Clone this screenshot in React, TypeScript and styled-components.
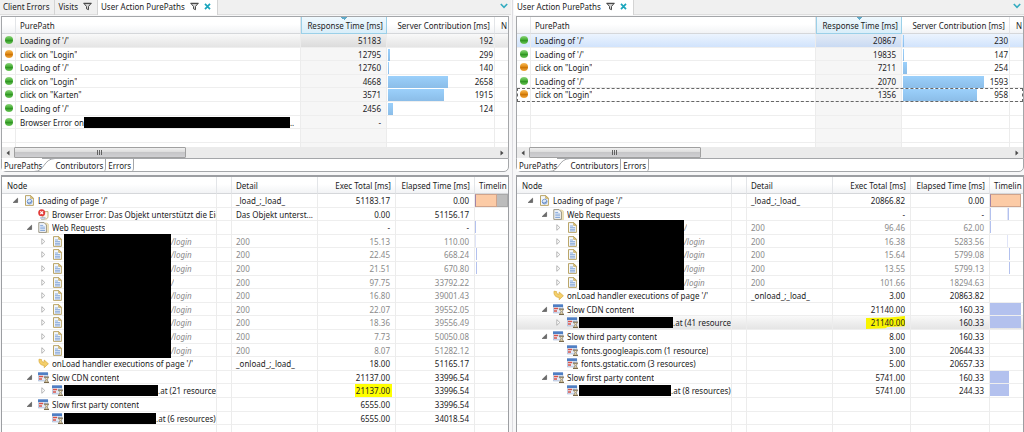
import React from "react";
import styled, { createGlobalStyle, css } from "styled-components";

const Global = createGlobalStyle`
  * { box-sizing: border-box; }
  body { margin: 0; background: #fff; overflow: hidden; }
  body, button {
    font-family: "Noto Sans", "Open Sans", sans-serif;
    font-size: 8px;
    line-height: 13px;
    color: #1c1c24;
  }
  button { background: none; border: 0; padding: 0; margin: 0; }
`;

/* ---------- window and panes ---------- */

const Workbench = styled.main`
  display: grid;
  grid-template-columns: 1fr 1fr;
  height: 100vh;
`;

const Pane = styled.section<{ $second?: boolean }>`
  display: flex;
  flex-direction: column;
  min-width: 0;
  min-height: 0;
  background: #f7f7f8;
  padding: ${(p) => (p.$second ? "0 0 0 3px" : "0 3px 0 1px")};
  border-left: ${(p) => (p.$second ? "1px solid #dcdce0" : "0")};
`;

const ViewTabs = styled.nav<{ $second?: boolean }>`
  display: flex;
  height: 15px;
  margin: ${(p) => (p.$second ? "0 0 0 -2px" : "0 -2px 0 -1px")};
  background: #f0f0f0;
  border-bottom: 1px solid #dedede;
`;

const ViewTab = styled.div<{ $active?: boolean }>`
  display: flex;
  align-items: center;
  gap: 5px;
  height: 15px;
  padding: 0 5px 2px 3px;
  white-space: nowrap;
  border-right: 1px solid #d4d4d4;
  ${(p) => p.$active && css`
    background: #fff;
    padding-right: 6px;
  `}
`;

const ViewMenu = styled.button`
  display: flex;
  align-items: center;
  margin-left: auto;
  padding: 0 3px 2px;
`;

const Glyph = styled.svg`
  display: block;
  flex: none;
`;

const ListFrame = styled.div`
  margin-top: 1px;
  border: 1px solid #a4a6a9;
  border-bottom: 0;
  background: #fff;
  height: 131px;
  overflow: hidden;
`;

const TreeFrame = styled.div`
  flex: 1;
  min-height: 0;
  margin-top: 3px;
  border: solid #9c9ea2;
  border-width: 2px 1px 0;
  background: #fff;
  overflow: hidden;
`;

/* ---------- tables ---------- */

const Grid = styled.table`
  width: 100%;
  table-layout: fixed;
  border-collapse: separate;
  border-spacing: 0;
`;

const Col = styled.col<{ $w?: number }>`
  width: ${(p) => (p.$w ? p.$w + "px" : "auto")};
`;

const HeadCell = styled.th<{ $right?: boolean; $sorted?: boolean; $pad?: number }>`
  height: 17px;
  padding: 0 ${(p) => p.$pad ?? 4}px;
  font-weight: 400;
  text-align: ${(p) => (p.$right ? "right" : "left")};
  white-space: nowrap;
  overflow: hidden;
  background: linear-gradient(#fff, #fff 45%, #f2f3f5);
  border-right: 1px solid #e3e5e8;
  border-bottom: 1px solid #d5d7da;
  &:last-child { border-right: 0; padding-right: 0; }
  ${(p) => p.$sorted && css`
    background:
      conic-gradient(from -45deg at 50% 3px, #5fa9c8 90deg, transparent 0) center top / 6px 3px no-repeat,
      linear-gradient(#f0f9fe, #d9eef9);
    border-right-color: #9bd0e8;
    border-left: 1px solid #9bd0e8;
    border-bottom-color: #9bd0e8;
  `}
`;

const Line = styled.tr<{ $tone?: "grey" | "blue" | "focus" }>`
  height: 14px;
  &:nth-child(5n + 2), &:nth-child(5n + 4) { height: 13px; }
  ${(p) => p.$tone === "grey" && css`background: linear-gradient(#f9f9f9, #e3e3e3);`}
  ${(p) => p.$tone === "blue" && css`background: linear-gradient(#ecf4fe, #cfe2fc);`}
  ${(p) => p.$tone === "focus" && css`
    outline: 1px dashed #666;
    outline-offset: -1px;
  `}
`;

const Cell = styled.td<{ $right?: boolean; $muted?: boolean; $shade?: boolean; $pad?: number }>`
  padding: 0 ${(p) => p.$pad ?? 4}px;
  height: inherit;
  vertical-align: top;
  white-space: nowrap;
  text-align: ${(p) => (p.$right ? "right" : "left")};
  color: ${(p) => (p.$muted ? "#8a8a8a" : "inherit")};
  background-color: ${(p) => (p.$shade ? "rgba(0, 0, 0, 0.035)" : "transparent")};
  background-image: linear-gradient(#eeeeee, #eeeeee);
  background-size: 100% 1px;
  background-position: bottom;
  background-repeat: no-repeat;
  border-right: 1px solid #ececec;
  &:last-child { border-right: 0; }
`;

const Flow = styled.div<{ $indent?: number }>`
  display: flex;
  align-items: center;
  height: 13px;
  padding-left: ${(p) => (p.$indent ?? 0) * 14}px;
`;

const Clip = styled.span<{ $italic?: boolean }>`
  flex: 0 1 auto;
  min-width: 0;
  overflow: hidden;
  font-style: ${(p) => (p.$italic ? "italic" : "normal")};
`;

const Redacted = styled.span<{ $w: number; $block?: boolean }>`
  flex: none;
  width: ${(p) => p.$w}px;
  height: ${(p) => (p.$block ? 13 : 11)}px;
  background: #000;
  box-shadow: ${(p) => (p.$block ? "0 1px 0 #000, 0 -1px 0 #000" : "none")};
`;

const IndentPad = styled.span`
  flex: none;
  width: 8px;
`;

const Twisty = styled.button`
  flex: none;
  display: flex;
  align-items: center;
  width: 14px;
  height: 13px;
  padding-left: 2px;
`;

const IconSlot = styled.span<{ $tight?: boolean }>`
  flex: none;
  display: flex;
  width: ${(p) => (p.$tight ? 12 : 14)}px;
`;

const Dot = styled.span<{ $tone: "ok" | "warn" }>`
  display: block;
  width: 8px;
  height: 8px;
  margin: 2px auto 0;
  border-radius: 50%;
  background: ${(p) =>
    p.$tone === "ok"
      ? "linear-gradient(#8fd67d, #45ad35 45%, #2f9422 55%, #6cc95a)"
      : "linear-gradient(#f9bd5c, #e08a14 45%, #cc7405 55%, #f5a93c)"};
`;

const BarCell = styled.div`
  display: flex;
  align-items: center;
  justify-content: space-between;
  height: 13px;
`;

const Bar = styled.span`
  height: 12px;
  background: linear-gradient(#9bd0fb, #8bbde8);
`;

const Value = styled.span`
  margin-left: auto;
`;

const Track = styled.div`
  display: flex;
  height: 13px;
  overflow: hidden;
`;

const Span = styled.span<{ $kind: Kind }>`
  flex: none;
  height: 12px;
  ${(p) => p.$kind === "load" && css`height: 13px; background: #fccba6; border: 1px solid #d0a48c; border-left-color: #a084a8;`}
  ${(p) => p.$kind === "idle" && css`height: 13px; background: #bcbcbc; border: 1px solid #a9a9a9; border-left: 0;`}
  ${(p) => p.$kind === "net" && css`background: #b3c1ee;`}
  ${(p) => p.$kind === "soft" && css`background: #dfe4f8;`}
`;

const Mark = styled.mark<{ $wide?: boolean }>`
  display: inline-block;
  color: inherit;
  background: #ffff00;
  height: 13px;
  padding: 0 2px 0 1px;
  margin-right: -2px;
  ${(p) => p.$wide && css`
    background: #f8f400;
    padding: 0 0 0 5px;
    margin-right: 0;
    clip-path: polygon(0 15%, 60% 12%, 100% 0, 100% 78%, 55% 84%, 50% 95%, 0 100%);
  `}
`;

/* ---------- scrollbar and page tabs ---------- */

const ScrollBar = styled.div`
  display: flex;
  align-items: center;
  height: 11px;
  background: #ebebeb;
  border: solid #a4a6a9;
  border-width: 0 1px;
`;

const ArrowButton = styled.button`
  display: flex;
  justify-content: center;
  flex: none;
  width: 12px;
`;

const Thumb = styled.div`
  display: flex;
  align-items: center;
  justify-content: center;
  width: 34%;
  height: 11px;
  margin-right: auto;
  background: linear-gradient(#f0f0f0, #dcdcdc 45%, #c6c6c8 50%, #cfcfd2);
  border: 1px solid #a0a0a0;
  border-radius: 1px;
`;

const PageTabs = styled.nav`
  display: flex;
  flex: none;
  height: 14px;
  background: #fff;
  border: 1px solid #a4a6a9;
  border-radius: 0 0 5px 5px;
`;

const PageTab = styled.button<{ $active?: boolean }>`
  height: 13px;
  padding: 0 2px;
  white-space: nowrap;
  ${(p) => p.$active
    ? css`
        margin-top: -1px;
        padding: 1px 0 0 2px;
        background: #fff;
      `
    : css`
        border-right: 1px solid #a4a6a9;
        border-radius: 0 0 4px 0;
      `}
`;

const Swoosh = styled.svg`
  display: block;
  flex: none;
  margin: -1px -2px 0 -3px;
  overflow: visible;
`;

/* ---------- icons ---------- */

const Funnel = () => (
  <Glyph width="9" height="9" viewBox="0 0 9 9">
    <path d="M1 1.5h7L5.5 4.5v3.2L3.5 6.8V4.5z" fill="#d8d8d8" stroke="#4a4a4a" strokeWidth="1" />
    <path d="M0.5 1.4h8" stroke="#4a4a4a" strokeWidth="1.3" />
  </Glyph>
);

const Cross = () => (
  <Glyph width="7" height="7" viewBox="0 0 7 7">
    <path d="M1 0.8l5 5.4M6 0.8L1 6.2" stroke="#1ba6bd" strokeWidth="1.7" />
  </Glyph>
);

const Chevron = () => (
  <Glyph width="8" height="6" viewBox="0 0 8 6">
    <path d="M0.8 1l3.2 3.4L7.2 1" fill="none" stroke="#35acc0" strokeWidth="1.6" />
  </Glyph>
);

const Arrow = ({ left }: { left?: boolean }) => (
  <Glyph width="4" height="6" viewBox="0 0 4 6">
    <path d={left ? "M3.5 0.5v5L0.5 3z" : "M0.5 0.5v5L3.5 3z"} fill="#4a4a4a" />
  </Glyph>
);

type IconName = "page" | "error" | "docs" | "doc" | "onload" | "slow";

const sheet = (
  <>
    <path d="M1.5 0.6h5.3L9.4 3.2v7.2H1.5z" fill="#f3f7fc" stroke="#b39c58" strokeWidth="0.9" />
    <path d="M6.6 0.6v2.8h2.8z" fill="#e6c777" stroke="#b39c58" strokeWidth="0.6" />
  </>
);

const sheetLines = <path d="M3 4h3M3 5.7h5M3 7.3h5M3 8.9h5" stroke="#7a9fd6" strokeWidth="0.9" />;

const Icon = ({ name }: { name: IconName }) => (
  <Glyph width="11" height="11" viewBox="0 0 11 11">
    {name === "page" && (
      <>
        {sheet}
        <circle cx="5.6" cy="6.6" r="2.4" fill="#dbe8f8" stroke="#6f95cf" strokeWidth="0.9" />
        <path d="M3.6 7.4c1.4 1.2 3.2 0.6 3.9-1.2" fill="none" stroke="#3f69b0" strokeWidth="0.8" />
      </>
    )}
    {name === "error" && (
      <>
        <path d="M4 2.6h6v4.8c0 1.6-1 2.6-2.4 2.6H3.4C4.6 9.4 4.8 8.4 4.8 7z" fill="#faf8ee" stroke="#b9a468" strokeWidth="0.9" />
        <path d="M2.6 8.4h4.6c0 1-0.6 1.7-1.4 1.7H3.6c-0.6 0-1-0.7-1-1.7z" fill="#dfe7f3" stroke="#8ea0c0" strokeWidth="0.6" />
        <circle cx="3.7" cy="3.7" r="3.5" fill="#e23b38" />
        <path d="M2.3 2.3l2.8 2.8M5.1 2.3L2.3 5.1" stroke="#fff" strokeWidth="1.2" />
      </>
    )}
    {name === "doc" && <>{sheet}{sheetLines}</>}
    {name === "docs" && (
      <>
        <path d="M3 1h6.2l1.5 1.6v8H3z" fill="#efe3bb" stroke="#d8c78e" strokeWidth="0.5" />
        <path d="M0.8 0.6h5.3l2.3 2.4v7.4H0.8z" fill="#f3f7fc" stroke="#8f8a78" strokeWidth="0.9" />
        <path d="M2.2 3.4h3M2.2 5.1h4.8M2.2 6.8h4.8M2.2 8.5h4.8" stroke="#7a9fd6" strokeWidth="0.9" />
      </>
    )}
    {name === "onload" && (
      <path
        d="M1 1.2l2.6 0.4c-0.2 1.8 0.6 2.6 2.6 2.6V2l4.2 3.8-4.2 3.9V7.4C2.6 7.4 0.6 5 1 1.2z"
        fill="#f4cf6a"
        stroke="#d9a93c"
        strokeWidth="0.7"
      />
    )}
    {name === "slow" && (
      <>
        <path d="M0.3 0.9h9.4v8H0.3z" fill="#e3ebf6" stroke="#8fa5ca" strokeWidth="0.6" />
        <path d="M0 0.4h10v2.6H0z" fill="#4f7fc4" />
        <path d="M1 4.6h4.2M1 6.9h3" stroke="#d9534a" strokeWidth="1.5" />
        <path d="M6 4.2h2.6" stroke="#8fa9d3" strokeWidth="0.9" />
        <path d="M6 5.1h5M6 10.5h5" stroke="#6b5a3a" strokeWidth="0.9" />
        <path d="M6.6 5.5h3.8L8.9 7.8l1.5 2.3H6.6l1.5-2.3z" fill="#f0e3bd" stroke="#7a6848" strokeWidth="0.6" />
      </>
    )}
  </Glyph>
);

const TwistyMark = ({ open }: { open: boolean }) => (
  <Glyph width="7" height="7" viewBox="0 0 7 7">
    {open
      ? <path d="M5.6 1.2v4.3H1.2z" fill="#6a6a6a" stroke="#4d4d4d" strokeWidth="0.6" />
      : <path d="M1.8 0.7L4.8 3.5 1.8 6.3z" fill="#fff" stroke="#a6a6a6" strokeWidth="0.8" />}
  </Glyph>
);

/* ---------- data ---------- */

type Kind = "gap" | "load" | "idle" | "net" | "soft";
type PathRow = {
  tone: "ok" | "warn";
  name: string;
  redact?: number;
  response: string;
  server?: string;
  bar?: number;
  look?: "grey" | "blue" | "focus";
};
type NodeRow = {
  depth: number;
  icon: IconName;
  open?: boolean;
  name: string;
  redact?: number;
  block?: boolean;
  detail?: string;
  exec: string;
  elapsed: string;
  mark?: "tight" | "wide";
  look?: "grey";
  spans?: [Kind, number][];
};

const pathsA: PathRow[] = [
  { tone: "ok", name: "Loading of '/'", response: "51183", server: "192", look: "grey" },
  { tone: "warn", name: 'click on "Login"', response: "12795", server: "299", bar: 2 },
  { tone: "ok", name: "Loading of '/'", response: "12760", server: "140", bar: 1 },
  { tone: "ok", name: 'click on "Login"', response: "4668", server: "2658", bar: 60 },
  { tone: "ok", name: 'click on "Karten"', response: "3571", server: "1915", bar: 56 },
  { tone: "ok", name: "Loading of '/'", response: "2456", server: "124", bar: 5 },
  { tone: "ok", name: "Browser Error on", redact: 206, response: "-" },
];

const pathsB: PathRow[] = [
  { tone: "ok", name: "Loading of '/'", response: "20867", server: "230", bar: 1, look: "blue" },
  { tone: "ok", name: "Loading of '/'", response: "19835", server: "147", bar: 1 },
  { tone: "warn", name: 'click on "Login"', response: "7211", server: "254", bar: 4 },
  { tone: "ok", name: "Loading of '/'", response: "2070", server: "1593", bar: 81 },
  { tone: "warn", name: 'click on "Login"', response: "1356", server: "958", bar: 74, look: "focus" },
];

const request = (name: string, redact: number, exec: string, elapsed: string, spans?: [Kind, number][]): NodeRow => ({
  depth: 2, icon: "doc", open: false, name, redact, block: true, detail: "200", exec, elapsed, spans,
});

const nodesA: NodeRow[] = [
  { depth: 0, icon: "page", open: true, name: "Loading of page '/'", detail: "_load_;_load_", exec: "51183.17", elapsed: "0.00", spans: [["load", 22], ["idle", 11]] },
  { depth: 1, icon: "error", name: "Browser Error: Das Objekt unterstützt die Eig", detail: "Das Objekt unterst...", exec: "0.00", elapsed: "51156.17" },
  { depth: 1, icon: "docs", open: true, name: "Web Requests", exec: "-", elapsed: "-", spans: [["net", 1]] },
  request("/login", 107, "15.13", "110.00", [["soft", 1]]),
  request("/login", 107, "22.45", "668.24", [["gap", 1], ["net", 1]]),
  request("/login", 107, "21.51", "670.80", [["gap", 1], ["net", 1]]),
  request("/", 107, "97.75", "33792.22"),
  request("/login", 107, "16.80", "39001.43"),
  request("/login", 107, "22.07", "39552.05"),
  request("/login", 107, "18.36", "39556.49"),
  request("/login", 107, "7.73", "50050.08"),
  request("/login", 107, "8.07", "51282.12"),
  { depth: 1, icon: "onload", name: "onLoad handler executions of page '/'", detail: "_onload_;_load_", exec: "18.00", elapsed: "51165.17" },
  { depth: 1, icon: "slow", open: true, name: "Slow CDN content", exec: "21137.00", elapsed: "33996.54" },
  { depth: 2, icon: "slow", open: false, name: ".at (21 resources", redact: 94, exec: "21137.00", elapsed: "33996.54", mark: "tight" },
  { depth: 1, icon: "slow", open: true, name: "Slow first party content", exec: "6555.00", elapsed: "33996.54" },
  { depth: 2, icon: "slow", name: ".at (6 resources)", redact: 92, exec: "6555.00", elapsed: "34018.54" },
];

const nodesB: NodeRow[] = [
  { depth: 0, icon: "page", open: true, name: "Loading of page '/'", detail: "_load_;_load_", exec: "20866.82", elapsed: "0.00", spans: [["load", 31]] },
  { depth: 1, icon: "docs", open: true, name: "Web Requests", exec: "-", elapsed: "-", spans: [["net", 1], ["gap", 16], ["soft", 1], ["net", 1]] },
  request("/", 105, "96.46", "62.00", [["net", 1]]),
  request("/login", 105, "16.38", "5283.56", [["gap", 17], ["soft", 1]]),
  request("/login", 105, "15.64", "5799.08", [["gap", 19], ["net", 1]]),
  request("/login", 105, "13.55", "5799.13", [["gap", 19], ["net", 1]]),
  request("/login", 105, "101.66", "18294.63"),
  { depth: 1, icon: "onload", name: "onLoad handler executions of page '/'", detail: "_onload_;_load_", exec: "3.00", elapsed: "20863.82" },
  { depth: 1, icon: "slow", open: true, name: "Slow CDN content", exec: "21140.00", elapsed: "160.33", spans: [["net", 31]] },
  { depth: 2, icon: "slow", open: false, name: ".at (41 resources", redact: 94, exec: "21140.00", elapsed: "160.33", mark: "wide", look: "grey", spans: [["net", 31]] },
  { depth: 1, icon: "slow", open: true, name: "Slow third party content", exec: "8.00", elapsed: "160.33" },
  { depth: 2, icon: "slow", name: "fonts.googleapis.com (1 resource)", exec: "3.00", elapsed: "20644.33" },
  { depth: 2, icon: "slow", name: "fonts.gstatic.com (3 resources)", exec: "5.00", elapsed: "20657.33" },
  { depth: 1, icon: "slow", open: true, name: "Slow first party content", exec: "5741.00", elapsed: "160.33", spans: [["net", 19]] },
  { depth: 2, icon: "slow", name: ".at (8 resources)", redact: 92, exec: "5741.00", elapsed: "244.33", spans: [["net", 19]] },
];

/* ---------- composed parts ---------- */

const blanks = (n: number) => Array.from({ length: n }, (_, i) => i);

const PathList = ({ rows }: { rows: PathRow[] }) => (
  <ListFrame>
    <Grid>
      <colgroup>
        <Col $w={14} /><Col /><Col $w={86} /><Col $w={108} /><Col $w={13} />
      </colgroup>
      <thead>
        <tr>
          <HeadCell aria-label="State" />
          <HeadCell>PurePath</HeadCell>
          <HeadCell $right $sorted $pad={3}>Response Time [ms]</HeadCell>
          <HeadCell $right>Server Contribution [ms]</HeadCell>
          <HeadCell $pad={6}>N</HeadCell>
        </tr>
      </thead>
      <tbody>
        {rows.map((r, i) => (
          <Line key={i} $tone={r.look}>
            <Cell $pad={0}><Dot $tone={r.tone} /></Cell>
            <Cell>
              <Flow>
                <Clip>{r.name}</Clip>
                {r.redact && <><Redacted $w={r.redact} /><Clip>..</Clip></>}
              </Flow>
            </Cell>
            <Cell $right $shade $pad={5}>{r.response}</Cell>
            <Cell $pad={1}>
              <BarCell>
                {r.bar && <Bar style={{ width: r.bar }} />}
                <Value>{r.server}</Value>
              </BarCell>
            </Cell>
            <Cell />
          </Line>
        ))}
        {blanks(9 - rows.length).map((i) => (
          <Line key={"blank" + i}>
            <Cell /><Cell /><Cell $shade /><Cell /><Cell />
          </Line>
        ))}
      </tbody>
    </Grid>
  </ListFrame>
);

const NodeTree = ({ rows }: { rows: NodeRow[] }) => (
  <TreeFrame>
    <Grid>
      <colgroup>
        <Col /><Col $w={15} /><Col $w={86} /><Col $w={78} /><Col $w={79} /><Col $w={33} />
      </colgroup>
      <thead>
        <tr>
          <HeadCell $pad={5}>Node</HeadCell>
          <HeadCell aria-label="Flag" />
          <HeadCell>Detail</HeadCell>
          <HeadCell $right>Exec Total [ms]</HeadCell>
          <HeadCell $right>Elapsed Time [ms]</HeadCell>
          <HeadCell>Timelin</HeadCell>
        </tr>
      </thead>
      <tbody>
        {rows.map((r, i) => (
          <Line key={i} $tone={r.look}>
            <Cell $pad={0} $muted={r.block}>
              <Flow $indent={r.depth}>
                <IndentPad />
                <Twisty
                  aria-label={r.open === undefined ? undefined : r.open ? "Collapse" : "Expand"}
                  disabled={r.open === undefined}
                >
                  {r.open !== undefined && <TwistyMark open={r.open} />}
                </Twisty>
                <IconSlot $tight={!!r.redact}><Icon name={r.icon} /></IconSlot>
                {r.redact && <Redacted $w={r.redact} $block={r.block} />}
                <Clip $italic={r.block}>{r.name}</Clip>
              </Flow>
            </Cell>
            <Cell />
            <Cell $muted={r.block}>{r.detail}</Cell>
            <Cell $right $muted={r.block} $pad={5}>
              {r.mark ? <Mark $wide={r.mark === "wide"}>{r.exec}</Mark> : r.exec}
            </Cell>
            <Cell $right $muted={r.block} $pad={5}>{r.elapsed}</Cell>
            <Cell $pad={0}>
              <Track>
                {r.spans?.map(([kind, size], k) => <Span key={k} $kind={kind} style={{ width: size }} />)}
              </Track>
            </Cell>
          </Line>
        ))}
        {blanks(4).map((i) => (
          <Line key={"blank" + i}>
            <Cell /><Cell /><Cell /><Cell /><Cell /><Cell />
          </Line>
        ))}
      </tbody>
    </Grid>
  </TreeFrame>
);

const ListFooter = () => (
  <>
    <ScrollBar>
      <ArrowButton aria-label="Scroll left"><Arrow left /></ArrowButton>
      <Thumb>
        <Glyph width="6" height="5" viewBox="0 0 6 5">
          <path d="M0.5 0v5M2.5 0v5M4.5 0v5" stroke="#555" strokeWidth="0.9" />
        </Glyph>
      </Thumb>
      <ArrowButton aria-label="Scroll right"><Arrow /></ArrowButton>
    </ScrollBar>
    <PageTabs>
      <PageTab $active>PurePaths</PageTab>
      <Swoosh width="16" height="14" viewBox="0 0 16 14">
        <path d="M-5 13.5C6 13.5 4 1 16 0.5" fill="none" stroke="#a4a6a9" />
      </Swoosh>
      <PageTab>Contributors</PageTab>
      <PageTab>Errors</PageTab>
    </PageTabs>
  </>
);

const ActiveTab = () => (
  <ViewTab $active>
    <button>User Action PurePaths</button>
    <Funnel />
    <button aria-label="Close"><Cross /></button>
  </ViewTab>
);

const Menu = () => (
  <ViewMenu aria-label="View menu"><Chevron /></ViewMenu>
);

export default function App() {
  return (
    <>
      <Global />
      <Workbench>
        <Pane>
          <ViewTabs>
            <ViewTab><button>Client Errors</button></ViewTab>
            <ViewTab><button>Visits</button><Funnel /></ViewTab>
            <ActiveTab />
            <Menu />
          </ViewTabs>
          <PathList rows={pathsA} />
          <ListFooter />
          <NodeTree rows={nodesA} />
        </Pane>
        <Pane $second>
          <ViewTabs $second>
            <ActiveTab />
            <Menu />
          </ViewTabs>
          <PathList rows={pathsB} />
          <ListFooter />
          <NodeTree rows={nodesB} />
        </Pane>
      </Workbench>
    </>
  );
}
